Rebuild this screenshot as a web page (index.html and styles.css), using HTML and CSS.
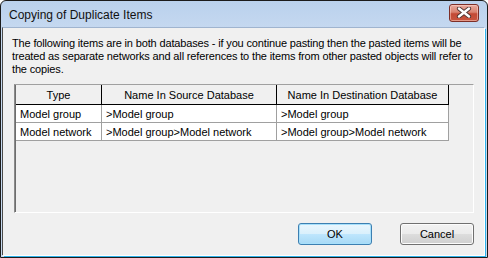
FILE: index.html
```html
<!DOCTYPE html>
<html lang="en">
<head>
    <meta charset="UTF-8">
    <title>Copying of Duplicate Items</title>
    <link rel="stylesheet" href="styles.css">
</head>
<body>
    <div class="window">
        <div class="titlebar">
            <span class="title">Copying of Duplicate Items</span>
            <button class="close-btn" aria-label="Close">
                <svg width="16" height="11" viewBox="0 0 16 11">
                    <path d="M3 1.5 L13 9.5 M13 1.5 L3 9.5" stroke="#4b3230" stroke-width="4.2" stroke-linecap="round"/>
                    <path d="M3 1.5 L13 9.5 M13 1.5 L3 9.5" stroke="#fff" stroke-width="2.4" stroke-linecap="round"/>
                </svg>
            </button>
        </div>

        <div class="client">
            <p class="message">The following items are in both databases - if you continue pasting then the pasted items will be treated as separate networks and all references to the items from other pasted objects will refer to the copies.</p>

            <div class="listview">
                <table class="items">
                    <thead>
                        <tr>
                            <th class="col-type">Type</th>
                            <th class="col-src">Name In Source Database</th>
                            <th class="col-dst">Name In Destination Database</th>
                        </tr>
                    </thead>
                    <tbody>
                        <tr>
                            <td>Model group</td>
                            <td>&gt;Model group</td>
                            <td>&gt;Model group</td>
                        </tr>
                        <tr>
                            <td>Model network</td>
                            <td>&gt;Model group&gt;Model network</td>
                            <td>&gt;Model group&gt;Model network</td>
                        </tr>
                    </tbody>
                </table>
            </div>

            <div class="buttons">
                <button class="btn btn-default">OK</button>
                <button class="btn">Cancel</button>
            </div>
        </div>
    </div>
</body>
</html>
```

FILE: styles.css
```css
body {
    margin: 0;
    padding: 0;
    background: #fff;
    font-family: "Liberation Sans", Arial, sans-serif;
}
.window {
    width: 488px;
    height: 258px;
    box-sizing: border-box;
    border: 1px solid #1b1b1b;
    border-radius: 6px 6px 0 0;
    background: linear-gradient(#bad1ed, #c6d9f0 30px, #c6d9f0);
    padding: 0 3px 2px 1px;
    display: flex;
    flex-direction: column;
}
.titlebar {
    height: 26px;
    display: flex;
    align-items: center;
    justify-content: space-between;
    padding: 0 5px 0 7px;
    box-sizing: border-box;
}
.title {
    font-family: "Liberation Sans", Arial, sans-serif;
    font-size: 12px;
    color: #111;
    margin-top: 1px;
}
.close-btn {
    width: 30px;
    height: 18px;
    margin-top: -3px;
    border: 1px solid #7d2e27;
    border-radius: 3px;
    background: linear-gradient(#e8a99f, #d9826f 45%, #c34a35 55%, #c8553f);
    box-shadow: inset 0 0 0 1px rgba(255, 220, 210, 0.5);
    padding: 0;
    display: flex;
    align-items: center;
    justify-content: center;
}
.client {
    flex: 1;
    background: #f0f0f0;
    border-left: 1px solid #4a4a4a;
    border-top: 1px solid #9fb4cf;
    box-shadow: 1px 1px 0 #fff, 2px 2px 0 #2fb2ea;
    display: flex;
    flex-direction: column;
    padding: 9px 10px 10px 8px;
}
.message {
    margin: 0;
    font-size: 11px;
    line-height: 13px;
    letter-spacing: -0.15px;
    color: #000;
    padding-left: 1px;
}
.listview {
    margin: 8px 0 0 3px;
    height: 129px;
    box-sizing: border-box;
    border: 1px solid;
    border-color: #a0a0a0 #fff #fff #8a8a8a;
    box-shadow: inset 1px 0 0 #6d6d6d;
    padding-left: 1px;
}
.items {
    border-collapse: collapse;
    font-size: 11px;
    color: #000;
}
.items th {
    font-weight: normal;
    height: 19px;
    padding: 0;
    text-align: center;
    border-right: 1px solid #000;
    border-bottom: 1px solid #000;
    background: #f0f0f0;
}
.items td {
    background: #fff;
    height: 17px;
    padding: 0 4px;
    border: 1px solid #a0a0a0;
    border-top: none;
    white-space: nowrap;
}
.items td:first-child {
    border-left: none;
}
.col-type {
    width: 85px;
}
.col-src {
    width: 174px;
}
.col-dst {
    width: 171px;
}
.buttons {
    display: flex;
    justify-content: flex-end;
    gap: 28px;
    margin-top: auto;
}
.btn {
    width: 74px;
    height: 22px;
    font-family: "Liberation Sans", Arial, sans-serif;
    font-size: 11px;
    color: #000;
    border: 1px solid #707070;
    border-radius: 3px;
    background: linear-gradient(#f2f2f2, #ebebeb 50%, #dddddd 51%, #cfcfcf);
    box-shadow: inset 0 0 0 1px #fcfcfc;
    padding: 0;
}
.btn-default {
    border-color: #3c7fb1;
    background: linear-gradient(#eaf6fd, #d9f0fc 50%, #bee6fd 51%, #a7d9f5);
    box-shadow: inset 0 0 0 1px #a7e0fb;
}
```
